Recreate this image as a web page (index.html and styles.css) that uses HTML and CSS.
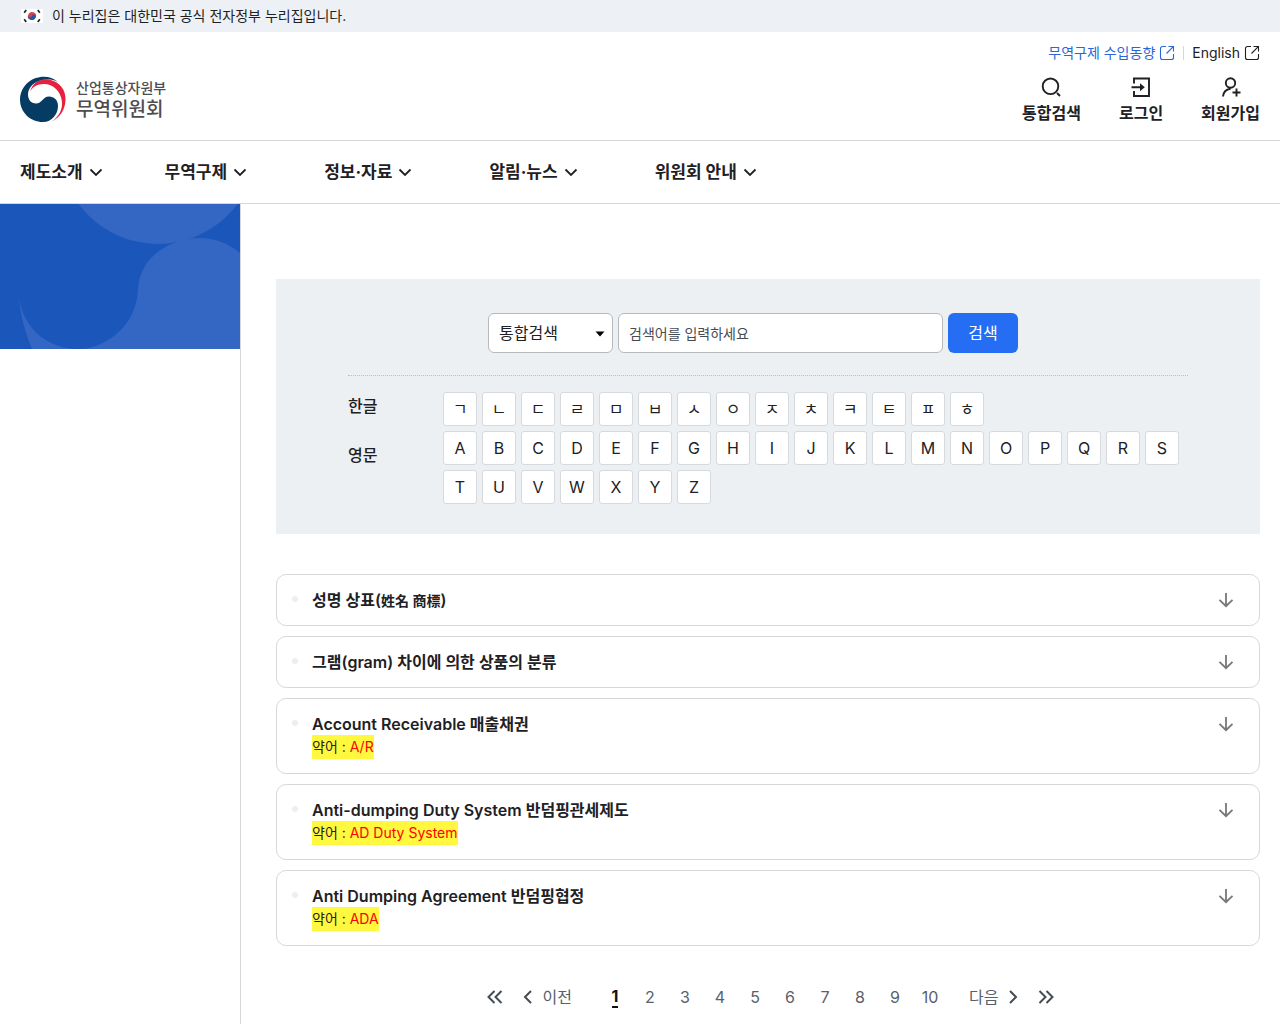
FILE: index.html
```html
<!DOCTYPE html>
<html lang="ko">
<head>
<meta charset="utf-8">
<meta name="viewport" content="width=device-width, initial-scale=1">
<title>무역위원회</title>
<link rel="stylesheet" href="styles.css">
</head>
<body>
<svg class="sprite" aria-hidden="true">
  <symbol id="i-link" viewBox="0 0 16 16"><path d="M7 1.500H3.500a2 2 0 0 0-2 2v9a2 2 0 0 0 2 2h9a2 2 0 0 0 2-2V9M9.500 1.500h5v5M14.300 1.700 7.500 8.500" fill="none" stroke="currentColor" stroke-width="1.100"/></symbol>
  <symbol id="i-down" viewBox="0 0 14 14"><path d="m1.500 4.500 5.500 5.500 5.500-5.500" fill="none" stroke="currentColor" stroke-width="1.800"/></symbol>
  <symbol id="i-arrow" viewBox="0 0 16 16"><path d="M8 1v13M1.500 7.800 8 14.200l6.500-6.400" fill="none" stroke="currentColor" stroke-width="1.800"/></symbol>
</svg>

<div class="gov">
  <svg class="gov-flag" viewBox="0 0 22 14" aria-hidden="true">
    <rect width="22" height="14" fill="#fff"/>
    <g transform="rotate(20 11 7)"><circle cx="11" cy="7" r="4" fill="#d6404b"/><path d="M7 7a2 2 0 0 0 4 0 2 2 0 0 1 4 0 4 4 0 0 1-8 0z" fill="#2457a5"/></g>
    <g stroke="#222" stroke-width="1.700" fill="none"><path d="m3.200 3.700 2-2.600M3.200 10.300l2 2.600M18.800 3.700l-2-2.600M18.800 10.300l-2 2.600"/></g>
  </svg>
  <span>이 누리집은 대한민국 공식 전자정부 누리집입니다.</span>
</div>

<header class="header">
  <div class="util">
    <a class="util-blue" href="#">무역구제 수입동향 <svg><use href="#i-link"/></svg></a>
    <a class="util-sep" href="#">English <svg><use href="#i-link"/></svg></a>
  </div>
  <div class="brand-row">
    <a class="brand" href="#">
      <svg class="emblem" viewBox="0 0 46 46" aria-hidden="true">
        <path d="M10 16C12 7 20 2 29 3.500 40 6 46 14 45.500 24 45 34 40 41.500 32 45.500 39 40 42.500 34 42 26 41 15 33 8 24 8 17 8 12 11 10 16z" fill="#e6203f"/>
        <path d="M38 6C32 .5 23 -.8 15 2.300 6 6 0 14 0 23.500 0 36 10 46 23 46 32 46 38 38 38 30c0-6-4-9.500-9-9.500-6 0-7 7-13 7-5 0-8-4-8-9C8 11 15 4.500 25 3.500c5-.5 9 .5 13 2.500z" fill="#063b63"/>
      </svg>
      <span class="brand-text"><span class="brand-ministry">산업통상자원부</span><span class="brand-name">무역위원회</span></span>
    </a>
    <ul class="tools">
      <li><a href="#"><svg viewBox="0 0 22 22"><path d="M10.500 2.500a7.800 7.800 0 1 0 0 15.600 7.800 7.800 0 0 0 0-15.600zM17 17l3 3" fill="none" stroke="currentColor" stroke-width="1.900"/></svg>통합검색</a></li>
      <li><a href="#"><svg viewBox="0 0 22 22"><path d="M4 7.500v-5h15v17.500H4v-5M1.500 11.200H13" fill="none" stroke="currentColor" stroke-width="1.900"/><path d="M10 7.200 14.800 11.200 10 15.200z" fill="currentColor"/></svg>로그인</a></li>
      <li><a href="#"><svg viewBox="0 0 22 22"><path d="M10.500 2.300a4.700 4.700 0 1 0 0 9.400 4.700 4.700 0 0 0 0-9.400zM3 20.500c.3-4.500 3-7 7.500-7.800M16.500 12.500v8M12.500 16.500h8" fill="none" stroke="currentColor" stroke-width="1.900"/></svg>회원가입</a></li>
    </ul>
  </div>
</header>

<nav class="nav" aria-label="주 메뉴">
  <ul>
    <li><button type="button">제도소개<svg><use href="#i-down"/></svg></button></li>
    <li><button type="button">무역구제<svg><use href="#i-down"/></svg></button></li>
    <li><button type="button">정보·자료<svg><use href="#i-down"/></svg></button></li>
    <li><button type="button">알림·뉴스<svg><use href="#i-down"/></svg></button></li>
    <li><button type="button">위원회 안내<svg><use href="#i-down"/></svg></button></li>
  </ul>
</nav>

<div class="layout">
  <aside class="side">
    <svg class="side-art" viewBox="0 0 240 145" preserveAspectRatio="xMidYMid slice" aria-hidden="true">
      <rect width="240" height="145" fill="#1b57bb"/>
      <circle cx="158" cy="-59" r="99" fill="#3466c3"/>
      <path d="M18 86C20 110 25 128 32 145H240V49C228 39 214 34 200 34 172 34 150 50 143 66 137 78 139 84 137 94 133 122 106 145 78 145 46 145 20 122 18 86z" fill="#3466c3"/>
    </svg>
  </aside>

  <main class="main">
    <section class="finder">
      <form class="search" onsubmit="return false">
        <span class="select-wrap">
          <select aria-label="검색 구분"><option>통합검색</option></select>
          <svg viewBox="0 0 10 6" aria-hidden="true"><path d="M.5.500h9L5 5.500z" fill="#000"/></svg>
        </span>
        <input type="text" aria-label="검색어" placeholder="검색어를 입력하세요">
        <button type="submit">검색</button>
      </form>
      <div class="index">
        <div class="index-labels"><span id="ko">한글</span><span id="en">영문</span></div>
        <div class="index-keys">
          <div class="keys" role="group" aria-labelledby="ko"><button>ㄱ</button><button>ㄴ</button><button>ㄷ</button><button>ㄹ</button><button>ㅁ</button><button>ㅂ</button><button>ㅅ</button><button>ㅇ</button><button>ㅈ</button><button>ㅊ</button><button>ㅋ</button><button>ㅌ</button><button>ㅍ</button><button>ㅎ</button></div>
          <div class="keys" role="group" aria-labelledby="en"><button>A</button><button>B</button><button>C</button><button>D</button><button>E</button><button>F</button><button>G</button><button>H</button><button>I</button><button>J</button><button>K</button><button>L</button><button>M</button><button>N</button><button>O</button><button>P</button><button>Q</button><button>R</button><button>S</button><button>T</button><button>U</button><button>V</button><button>W</button><button>X</button><button>Y</button><button>Z</button></div>
        </div>
      </div>
    </section>

    <ul class="terms">
      <li><button class="term" type="button"><i class="dot"></i><span class="term-body"><strong>성명 상표(<span class="hanja">姓名 商標</span>)</strong></span><svg><use href="#i-arrow"/></svg></button></li>
      <li><button class="term" type="button"><i class="dot"></i><span class="term-body"><strong>그램(gram) 차이에 의한 상품의 분류</strong></span><svg><use href="#i-arrow"/></svg></button></li>
      <li><button class="term" type="button"><i class="dot"></i><span class="term-body"><strong>Account Receivable 매출채권</strong><span class="abbr">약어 : <em>A/R</em></span></span><svg><use href="#i-arrow"/></svg></button></li>
      <li><button class="term" type="button"><i class="dot"></i><span class="term-body"><strong>Anti-dumping Duty System 반덤핑관세제도</strong><span class="abbr">약어 : <em>AD Duty System</em></span></span><svg><use href="#i-arrow"/></svg></button></li>
      <li><button class="term" type="button"><i class="dot"></i><span class="term-body"><strong>Anti Dumping Agreement 반덤핑협정</strong><span class="abbr">약어 : <em>ADA</em></span></span><svg><use href="#i-arrow"/></svg></button></li>
    </ul>

    <nav class="pager" aria-label="페이지">
      <a href="#" aria-label="처음"><svg class="double" viewBox="0 0 16 14"><path d="M7.500 1 1.500 7l6 6M14.500 1l-6 6 6 6"/></svg></a>
      <a href="#"><svg viewBox="0 0 10 14"><path d="M8 1 2 7l6 6"/></svg>이전</a>
      <div class="pages"><a href="#" aria-current="page"><span>1</span></a><a href="#">2</a><a href="#">3</a><a href="#">4</a><a href="#">5</a><a href="#">6</a><a href="#">7</a><a href="#">8</a><a href="#">9</a><a href="#">10</a></div>
      <a href="#">다음<svg viewBox="0 0 10 14"><path d="m2 1 6 6-6 6"/></svg></a>
      <a href="#" aria-label="마지막"><svg class="double" viewBox="0 0 16 14"><path d="m1.500 1 6 6-6 6M8.500 1l6 6-6 6"/></svg></a>
    </nav>
  </main>
</div>
</body>
</html>
```
FILE: styles.css
```css
* { box-sizing: border-box; }

body {
  margin: 0;
  min-height: 100vh;
  display: flex;
  flex-direction: column;
  background: #fff;
  color: #1e2124;
  font: 16px/24px Inter, "Noto Sans CJK KR", sans-serif;
}

ul { margin: 0; padding: 0; list-style: none; }
a { color: inherit; text-decoration: none; }
button, input, select { font: inherit; color: inherit; }
button { border: 0; padding: 0; background: none; cursor: pointer; }
svg { flex: none; }
.sprite { display: none; }

.gov {
  display: flex;
  align-items: center;
  gap: 9px;
  height: 32px;
  padding: 0 21px;
  background: #edf1f5;
  font-size: 14px;
}
.gov-flag { width: 22px; height: 14px; }

.header {
  padding: 9px 20px 15px;
  border-bottom: 1px solid #d8d8d8;
}
.util {
  display: flex;
  justify-content: flex-end;
  font-size: 14px;
}
.util a { display: flex; align-items: center; gap: 4px; }
.util svg { width: 16px; height: 16px; }
.util-blue { color: #2a66d9; }
.util-sep::before {
  content: "";
  width: 1px;
  height: 14px;
  margin: 0 4px 0 8px;
  background: #d8d8d8;
}

.brand-row {
  display: flex;
  justify-content: space-between;
  align-items: flex-start;
  margin-top: 11px;
}
.brand { display: flex; align-items: center; gap: 10px; color: #4d4d50; }
.emblem { width: 46px; height: 46px; }
.brand-text { display: flex; flex-direction: column; font-weight: 500; }
.brand-ministry { font-size: 14px; line-height: 22px; }
.brand-name { font-size: 19px; line-height: 22px; }

.tools { display: flex; gap: 38px; }
.tools a {
  display: flex;
  flex-direction: column;
  align-items: center;
  gap: 3px;
  font-weight: 700;
}
.tools svg { width: 22px; height: 22px; }

.nav { padding: 0 20px; border-bottom: 1px solid #d8d8d8; }
.nav ul { display: flex; }
.nav li { padding-right: 77px; }
.nav li:first-child { padding-right: 62px; }
.nav button {
  display: flex;
  align-items: center;
  gap: 6px;
  height: 62px;
  font-size: 17px;
  font-weight: 700;
}
.nav svg { width: 14px; height: 14px; }

.layout { flex: 1; display: flex; }
.side { flex: none; width: 241px; border-right: 1px solid #d8d8d8; }
.side-art { display: block; width: 100%; height: 145px; }
.main { flex: 1; min-width: 0; padding: 75px 20px 7px 35px; }

.finder { padding: 34px 72px 30px; background: #ecf0f2; }
.search {
  display: flex;
  justify-content: center;
  gap: 5px;
  padding: 0 30px 22px 0;
  border-bottom: 1px dotted #b9bec2;
}
.select-wrap { position: relative; width: 125px; }
.select-wrap select {
  appearance: none;
  width: 100%;
  height: 40px;
  padding: 0 10px;
  border: 1px solid #b6babd;
  border-radius: 6px;
  background: #fff;
}
.select-wrap svg {
  position: absolute;
  top: 18px;
  right: 8px;
  width: 10px;
  height: 6px;
  pointer-events: none;
}
.search input {
  width: 325px;
  height: 40px;
  padding: 0 10px;
  border: 1px solid #b6babd;
  border-radius: 6px;
  background: #fff;
  font-size: 14px;
}
.search input::placeholder { color: #464c53; opacity: 1; }
.search button {
  width: 70px;
  height: 40px;
  border-radius: 6px;
  background: #256ef4;
  color: #fff;
}

.index { display: flex; padding-top: 16px; }
.index-labels {
  flex: none;
  display: flex;
  flex-direction: column;
  gap: 21px;
  width: 95px;
  line-height: 28px;
  font-weight: 500;
}
.index-keys { display: flex; flex-direction: column; gap: 5px; }
.keys { display: flex; flex-wrap: wrap; gap: 5px; }
.keys button {
  width: 34px;
  height: 34px;
  border: 1px solid #d6dade;
  border-radius: 3px;
  background: #fff;
}

.terms { display: flex; flex-direction: column; gap: 10px; margin-top: 40px; }
.term {
  display: flex;
  align-items: flex-start;
  width: 100%;
  padding: 14px 25px 14px 15px;
  border: 1px solid #d8d8d8;
  border-radius: 10px;
  text-align: left;
}
.dot {
  flex: none;
  width: 6px;
  height: 6px;
  margin: 7px 14px 0 0;
  border-radius: 3px;
  background: #eee;
}
.term-body {
  flex: 1;
  display: flex;
  flex-direction: column;
  align-items: flex-start;
  line-height: 22px;
}
.term strong { font-weight: 600; }
.hanja { font-size: 14px; line-height: 14px; }
.abbr { background: #fff83f; font-size: 14px; line-height: 24px; }
.abbr em { color: #f00; font-style: normal; }
.term svg { width: 16px; height: 16px; margin-top: 3px; color: #777; }

.pager {
  display: flex;
  justify-content: center;
  align-items: center;
  gap: 20px;
  height: 40px;
  margin-top: 31px;
  padding-left: 5px;
  color: #58616a;
}
.pager a { display: flex; align-items: center; gap: 10px; }
.pager svg {
  width: 10px;
  height: 14px;
  fill: none;
  stroke: #464c53;
  stroke-width: 2;
}
.pager svg.double { width: 16px; }
.pages { display: flex; gap: 3px; margin: 0 3px 0 7px; }
.pages a { justify-content: center; width: 32px; height: 40px; }
.pages [aria-current] { color: #111; font-weight: 700; }
.pages [aria-current] span { line-height: 20px; border-bottom: 2px solid #111; }
```
